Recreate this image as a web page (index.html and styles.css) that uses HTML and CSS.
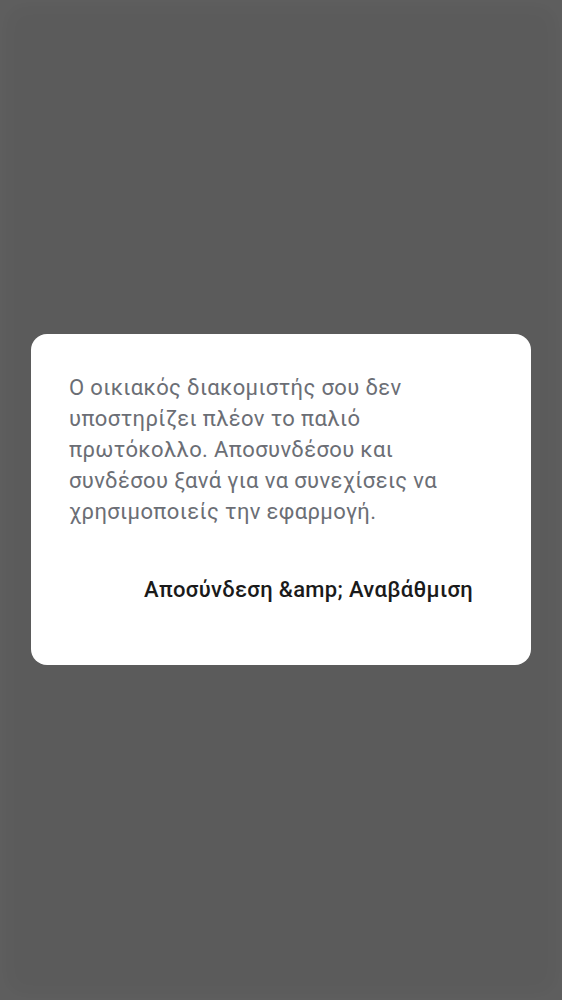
FILE: index.html
```html
<!DOCTYPE html>
<html lang="el">
<head>
<meta charset="utf-8">
<link rel="stylesheet" href="styles.css">
</head>
<body>
<div class="overlay">
  <div class="dialog">
    <p class="message">Ο οικιακός διακομιστής σου δεν υποστηρίζει πλέον το παλιό πρωτόκολλο. Αποσυνδέσου και συνδέσου ξανά για να συνεχίσεις να χρησιμοποιείς την εφαρμογή.</p>
    <div class="actions">
      <button class="action">Αποσύνδεση &amp;amp; Αναβάθμιση</button>
    </div>
  </div>
</div>
</body>
</html>
```
FILE: styles.css
```css
html, body {
  margin: 0;
  padding: 0;
  height: 100%;
}
body {
  background: #5b5b5b;
  font-family: Roboto, "Noto Sans", sans-serif;
}
.overlay {
  height: 100%;
  display: flex;
  align-items: flex-start;
  justify-content: center;
  box-shadow: inset 0 0 24px 6px rgba(255,255,255,0.03);
}
.dialog {
  width: 500px;
  box-sizing: border-box;
  background: #ffffff;
  border-radius: 16px;
  padding: 38px 58px 63px 38px;
  margin-top: 334px;
}
.message {
  margin: 0;
  font-size: 22px;
  line-height: 31px;
  letter-spacing: 0.37px;
  color: #6b6e75;
}
.actions {
  display: flex;
  justify-content: flex-end;
  margin-top: 51px;
}
.action {
  border: none;
  background: none;
  padding: 0;
  font-family: inherit;
  font-size: 22px;
  font-weight: 500;
  letter-spacing: 0.33px;
  color: #1a1a1a;
  line-height: 24px;
}
```
